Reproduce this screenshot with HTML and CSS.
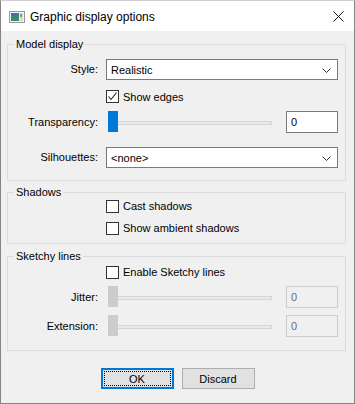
FILE: index.html
```html
<!DOCTYPE html>
<html>
<head>
<meta charset="utf-8">
<link rel="stylesheet" href="styles.css">
</head>
<body>
<div class="window">
  <div class="titlebar">
    <svg class="appicon" width="16" height="12" viewBox="0 0 16 12">
      <rect x="0.5" y="0.5" width="15" height="11" fill="#f4f4f4" stroke="#9a9a9a"/>
      <rect x="2" y="2" width="8" height="8" fill="#3a8a7a"/>
      <rect x="2" y="2" width="8" height="3" fill="#4a6fb0"/>
      <rect x="11" y="2" width="3" height="8" fill="#d8d8d8"/>
      <rect x="11" y="3" width="2" height="3" fill="#6ab04a"/>
    </svg>
    <span class="title">Graphic display options</span>
    <svg class="close" width="11" height="11" viewBox="0 0 11 11">
      <path d="M0.5 0.5 L10.5 10.5 M10.5 0.5 L0.5 10.5" stroke="#111" stroke-width="1"/>
    </svg>
  </div>
  <div class="content">
    <fieldset class="group g1">
      <legend>Model display</legend>
      <div class="row r-style">
        <label class="lbl">Style:</label>
        <div class="select"><span>Realistic</span><svg class="chev" width="9" height="5" viewBox="0 0 9 5"><path d="M0.5 0.5 L4.5 4.5 L8.5 0.5" fill="none" stroke="#333"/></svg></div>
      </div>
      <div class="row r-check1">
        <span class="lbl"></span>
        <div class="check"><span class="box"><svg width="11" height="11" viewBox="0 0 11 11"><path d="M1.5 5.5 L4 8.5 L9.5 1.5" fill="none" stroke="#222" stroke-width="1.1"/></svg></span><span>Show edges</span></div>
      </div>
      <div class="row r-slider">
        <label class="lbl">Transparency:</label>
        <div class="slider"><div class="track"></div><div class="thumb"></div></div>
        <div class="num">0</div>
      </div>
      <div class="row r-sil">
        <label class="lbl">Silhouettes:</label>
        <div class="select"><span>&lt;none&gt;</span><svg class="chev" width="9" height="5" viewBox="0 0 9 5"><path d="M0.5 0.5 L4.5 4.5 L8.5 0.5" fill="none" stroke="#333"/></svg></div>
      </div>
    </fieldset>

    <fieldset class="group g2">
      <legend>Shadows</legend>
      <div class="row r-c2">
        <span class="lbl"></span>
        <div class="check"><span class="box"></span><span>Cast shadows</span></div>
      </div>
      <div class="row r-c3">
        <span class="lbl"></span>
        <div class="check"><span class="box"></span><span>Show ambient shadows</span></div>
      </div>
    </fieldset>

    <fieldset class="group g3">
      <legend>Sketchy lines</legend>
      <div class="row r-c4">
        <span class="lbl"></span>
        <div class="check"><span class="box"></span><span>Enable Sketchy lines</span></div>
      </div>
      <div class="row r-jit">
        <label class="lbl">Jitter:</label>
        <div class="slider disabled"><div class="track"></div><div class="thumb"></div></div>
        <div class="num disabled">0</div>
      </div>
      <div class="row r-ext">
        <label class="lbl">Extension:</label>
        <div class="slider disabled"><div class="track"></div><div class="thumb"></div></div>
        <div class="num disabled">0</div>
      </div>
    </fieldset>

    <div class="buttons">
      <button class="btn ok"><span class="focus">OK</span></button>
      <button class="btn">Discard</button>
    </div>
  </div>
</div>
</body>
</html>
```
FILE: styles.css
```css
* { box-sizing: border-box; }
html, body { margin: 0; padding: 0; }
body {
  width: 355px;
  height: 404px;
  font-family: "Liberation Sans", Arial, sans-serif;
  font-size: 11px;
  color: #000;
  background: #fff;
}
.window {
  width: 355px;
  height: 404px;
  border: 1px solid #858585;
  border-top-color: #cfcfcf;
  background: #f0f0f0;
  display: flex;
  flex-direction: column;
}
.titlebar {
  height: 30px;
  background: #fff;
  display: flex;
  align-items: center;
  padding-left: 8px;
  padding-right: 10px;
  flex: none;
}
.appicon { flex: none; margin-top: 1px; }
.title {
  font-family: "Segoe UI", "Liberation Sans", Arial, sans-serif;
  font-size: 12px;
  margin-left: 5px;
  flex: 1;
  padding-top: 1px;
}
.close { flex: none; margin-top: 1px; }

.content {
  flex: 1;
  padding: 6px 8px 0 6px;
  display: flex;
  flex-direction: column;
}
.group {
  margin: 0;
  padding: 0 7px 0 0;
  border: 1px solid #dcdcdc;
  min-width: 0;
}
.group legend {
  margin-left: 6px;
  padding: 0 2px;
  line-height: 14px;
  color: #000;
}
.g2 { margin-top: 4px; }
.g3 { margin-top: 5px; }

.row {
  display: flex;
  align-items: center;
}
.lbl {
  width: 90px;
  text-align: right;
  margin-right: 8px;
  flex: none;
  line-height: 13px;
}
.r-style { margin-top: 8px; height: 21px; }
.r-check1 { margin-top: 10px; height: 13px; }
.r-slider { margin-top: 8px; height: 22px; }
.r-sil { margin-top: 14px; height: 21px; margin-bottom: 12px; }

.r-c2 { margin-top: 0px; height: 14px; }
.r-c3 { margin-top: 8px; height: 14px; margin-bottom: 8px; }

.r-c4 { margin-top: 2px; height: 14px; }
.r-jit { margin-top: 7px; height: 22px; }
.r-ext { margin-top: 7px; height: 22px; margin-bottom: 13px; }

.select {
  flex: 1;
  height: 21px;
  background: #fff;
  border: 1px solid #7a7a7a;
  display: flex;
  align-items: center;
  justify-content: space-between;
  padding: 0 6px 0 4px;
}
.chev { flex: none; margin-top: 1px; }

.check {
  display: flex;
  align-items: center;
  height: 13px;
}
.box {
  width: 13px;
  height: 13px;
  border: 1px solid #333;
  background: #fff;
  margin-right: 4px;
  display: flex;
  align-items: center;
  justify-content: center;
  flex: none;
}
.box svg { display: block; }

.slider {
  width: 172px;
  height: 22px;
  margin-right: 8px;
  position: relative;
  flex: none;
}
.track {
  position: absolute;
  left: 3px;
  right: 6px;
  top: 10px;
  height: 4px;
  background: #e7eaea;
  border: 1px solid #d6d6d6;
}
.thumb {
  position: absolute;
  left: 2px;
  top: 0;
  width: 10px;
  height: 21px;
  background: #0078d7;
}
.slider.disabled .thumb { background: #cccccc; }

.num {
  width: 52px;
  height: 22px;
  background: #fff;
  border: 1px solid #7a7a7a;
  padding: 0 0 0 4px;
  display: flex;
  align-items: center;
  flex: none;
}
.num.disabled {
  background: #f0f0f0;
  border-color: #cccccc;
  color: #6d6d6d;
}

.buttons {
  display: flex;
  justify-content: center;
  gap: 8px;
  margin-top: 17px;
  padding-left: 2px;
}
.btn {
  width: 73px;
  height: 21px;
  background: #e1e1e1;
  border: 1px solid #adadad;
  font-family: "Liberation Sans", Arial, sans-serif;
  font-size: 11px;
  color: #000;
  padding: 0;
  margin: 0;
  display: flex;
  align-items: center;
  justify-content: center;
}
.btn.ok {
  border: 2px solid #0078d7;
  padding: 1px;
}
.focus {
  width: 100%;
  height: 100%;
  border: 1px dotted #000;
  display: flex;
  align-items: center;
  justify-content: center;
}
```
